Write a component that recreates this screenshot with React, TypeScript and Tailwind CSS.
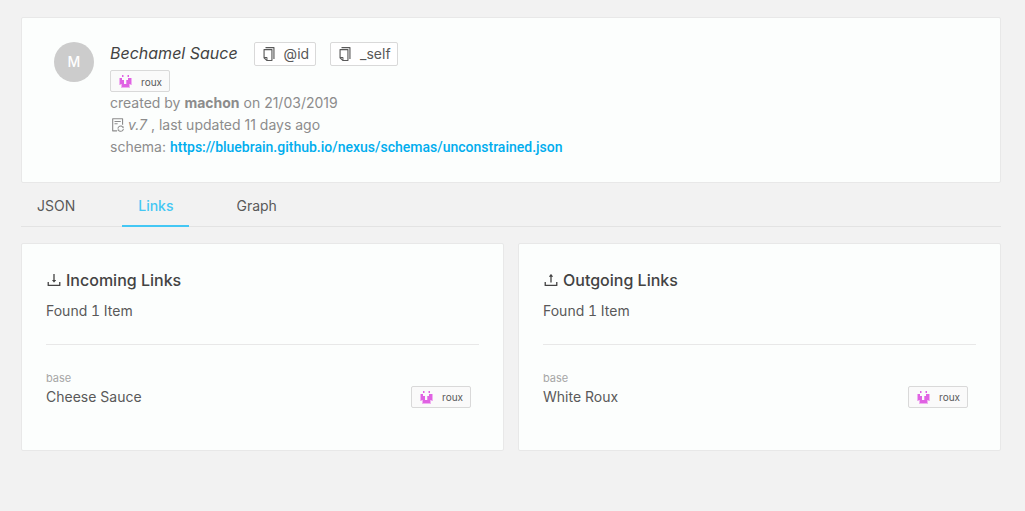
import { useState } from "react";
import type { ReactNode } from "react";
import {
  AiOutlineCopy,
  AiOutlineDownload,
  AiOutlineFileSync,
  AiOutlineUpload,
} from "react-icons/ai";

const TABS = ["JSON", "Links", "Graph"];

function Identicon() {
  return (
    <svg
      className="size-[13px]"
      viewBox="0 0 13 13"
      shapeRendering="crispEdges"
      aria-hidden="true"
    >
      <path fill="#efb0f0" d="M3 0h2v2h-2zM8 0h2v2h-2zM0 3h13v7h-13zM2 10h9v3h-9z" />
      <path fill="#e062e3" d="M3 0h1v2h-1zM9 0h1v2h-1zM1 3h3v6h-3zM9 3h3v6h-3zM3 5h2v5h-2zM8 5h2v5h-2zM3 9h7v3h-7z" />
      <path fill="#e98deb" d="M7 5h1v4h-1z" />
      <path fill="#fafafa" d="M3 3h6v2h-6zM5 5h2v4h-2z" />
    </svg>
  );
}

function TypeTag({ label }: { label: string }) {
  return (
    <span className="inline-flex h-[22px] w-[60px] items-center justify-between rounded-xs border border-[#d9d9d9] bg-[#fafafa] pt-px pr-[7px] pl-2 text-[10px] text-[#595959]">
      <Identicon />
      {label}
    </span>
  );
}

function CopyButton({ label }: { label: string }) {
  return (
    <button
      type="button"
      className="flex h-6 items-center gap-[7px] rounded-xs border border-[#d9d9d9] bg-white px-[6px] text-sm text-[#595959]"
    >
      <AiOutlineCopy className="size-4" aria-hidden="true" />
      {label}
    </button>
  );
}

function LinksCard({
  title,
  icon,
  item,
}: {
  title: string;
  icon: ReactNode;
  item: string;
}) {
  return (
    <section className="min-w-0 rounded-xs border border-[#e8e8e8] bg-[#fcfefd] px-6 pt-6 pb-8">
      <h2 className="flex h-6 items-center gap-1 text-base font-medium text-[#434343]">
        {icon}
        {title}
      </h2>
      <p className="mt-2 leading-[22px] tabular-nums">Found 1 Item</p>
      <hr className="mt-[22px] border-[#e8e8e8]" />
      <div className="flex items-end justify-between pt-[25px] pr-2 pb-[10px]">
        <div>
          <div className="text-[11px] leading-4 text-[#a6a6a6]">base</div>
          <div className="leading-[22px]">{item}</div>
        </div>
        <TypeTag label="roux" />
      </div>
    </section>
  );
}

export default function App() {
  const [active, setActive] = useState("Links");

  return (
    <main className="min-h-screen bg-[#f2f2f2] px-[21px] pt-[17px] pr-6 font-['Inter',sans-serif] text-sm text-[#595959]">
      <header className="flex gap-4 rounded-xs border border-[#e8e8e8] bg-[#fcfefd] px-8 py-6 text-[#8c8c8c]">
        <div className="flex size-10 shrink-0 items-center justify-center rounded-full bg-[#cccccc] font-medium text-white">
          M
        </div>
        <div className="min-w-0 leading-[22px]">
          <div className="flex items-start pb-1">
            <h1 className="mr-4 text-base leading-[22px] text-[#434343] italic">
              Bechamel Sauce
            </h1>
            <div className="flex gap-[14px]">
              <CopyButton label="@id" />
              <CopyButton label="_self" />
            </div>
          </div>
          <div className="flex">
            <TypeTag label="roux" />
          </div>
          <div>
            created by <b>machon</b> on 21/03/2019
          </div>
          <div className="flex items-center gap-[2px]">
            <AiOutlineFileSync className="size-4" aria-hidden="true" />
            <span>
              <i>v.7</i> , last updated 11 days ago
            </span>
          </div>
          <div>
            schema:{" "}
            <a
              href="https://bluebrain.github.io/nexus/schemas/unconstrained.json"
              className="font-['Roboto',sans-serif] font-medium text-[#00adee]"
            >
              https://bluebrain.github.io/nexus/schemas/unconstrained.json
            </a>
          </div>
        </div>
      </header>

      <div role="tablist" className="flex h-11 gap-[31px] border-b border-[#e3e3e3]">
        {TABS.map((tab) => (
          <button
            key={tab}
            type="button"
            role="tab"
            aria-selected={tab === active}
            onClick={() => setActive(tab)}
            className={
              tab === active
                ? "-mb-px border-b-2 border-[#44c7f4] px-4 pt-1 font-medium text-[#44c7f4]"
                : "-mb-px border-b-2 border-transparent px-4 pt-1"
            }
          >
            {tab}
          </button>
        ))}
      </div>

      <div className="grid grid-cols-2 gap-[14px] pt-4">
        <LinksCard
          title="Incoming Links"
          item="Cheese Sauce"
          icon={<AiOutlineDownload className="size-4 scale-110" aria-hidden="true" />}
        />
        <LinksCard
          title="Outgoing Links"
          item="White Roux"
          icon={<AiOutlineUpload className="size-4 scale-110" aria-hidden="true" />}
        />
      </div>
    </main>
  );
}
